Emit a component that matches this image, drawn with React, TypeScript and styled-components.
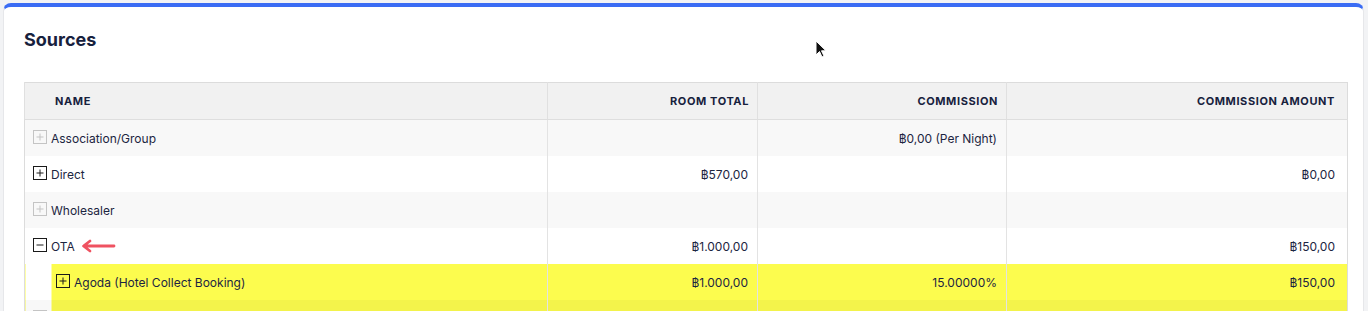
import React from "react";
import styled, { createGlobalStyle, css } from "styled-components";

const GlobalStyle = createGlobalStyle`
  html, body {
    margin: 0;
    padding: 0;
    background: #f2f3f5;
    font-family: Inter, "Noto Sans", "DejaVu Sans", sans-serif;
    color: #1c2541;
  }
`;

const Page = styled.div`
  position: relative;
  height: 311px;
  overflow: hidden;
  padding: 3px 4px 0 3px;
`;

const Card = styled.div`
  background: #ffffff;
  border-top: 4px solid #3a6cf4;
  border-left: 1px solid #e6e7ea;
  border-right: 1px solid #e6e7ea;
  border-radius: 8px 8px 0 0;
  padding: 21px 15px 0 20px;
  height: 320px;
`;

const Title = styled.h2`
  margin: 0 0 30px 0;
  font-size: 18px;
  line-height: 24px;
  font-weight: 700;
  color: #17213d;
`;

const Table = styled.table`
  width: 1323px;
  border-collapse: collapse;
  table-layout: fixed;
  border: 1px solid #dcdcdc;
  font-size: 12px;
`;

const HeadCell = styled.th<{ $align?: "left" | "right"; $last?: boolean }>`
  height: 36px;
  padding: 0 ${(p) => (p.$last ? "12px" : "8px")} 0 ${(p) => (p.$align === "left" ? "30px" : "8px")};
  text-align: ${(p) => p.$align ?? "right"};
  background: #f1f1f1;
  border-bottom: 1px solid #dedede;
  border-left: 1px solid #e0e0e0;
  font-size: 11px;
  font-weight: 700;
  letter-spacing: 0.6px;
  color: #17213d;
  text-transform: uppercase;
`;

const Row = styled.tr<{ $striped?: boolean }>`
  height: 36px;
  background: ${(p) => (p.$striped ? "#f8f8f8" : "#ffffff")};
`;

const yellow = (striped?: boolean) => (striped ? "#f3f34b" : "#fcfc4e");

const Cell = styled.td<{ $highlight?: boolean; $striped?: boolean; $last?: boolean }>`
  padding: 0 ${(p) => (p.$last ? "12px" : "9px")} 0 8px;
  text-align: right;
  border-left: 1px solid #e3e3e3;
  color: #1c2541;
  white-space: nowrap;
  ${(p) =>
    p.$highlight &&
    css`
      background: ${yellow(p.$striped)};
    `}
`;

/* the marker highlight starts 26px into the name column */
const NameCell = styled.td<{ $highlight?: boolean; $striped?: boolean }>`
  padding: 0;
  height: 36px;
  ${(p) =>
    p.$highlight &&
    css`
      background: linear-gradient(to right, transparent 26px, ${yellow(p.$striped)} 26px);
    `}
`;

const NameInner = styled.div<{ $level: number }>`
  display: flex;
  align-items: center;
  gap: 4px;
  height: 36px;
  padding-left: ${(p) => (p.$level > 0 ? 31 : 8)}px;
`;

const Toggle = styled.span<{ $disabled?: boolean }>`
  display: inline-flex;
  width: 14px;
  height: 14px;
  flex: none;
  box-sizing: border-box;
  margin-top: -2px;
  border: 1px solid ${(p) => (p.$disabled ? "#c4c4c4" : "#1a1a1a")};
  color: ${(p) => (p.$disabled ? "#c4c4c4" : "#1a1a1a")};
`;

const Arrow = styled.svg`
  margin-left: 2px;
`;

const Cursor = styled.svg`
  position: absolute;
  left: 815px;
  top: 40px;
`;

function ToggleIcon({ open, disabled }: { open?: boolean; disabled?: boolean }) {
  return (
    <Toggle $disabled={disabled}>
      <svg width="12" height="12" viewBox="0 0 12 12">
        <path d="M2.5 6h7" stroke="currentColor" strokeWidth="1" />
        {!open && <path d="M6 2.5v7" stroke="currentColor" strokeWidth="1" />}
      </svg>
    </Toggle>
  );
}

interface SourceRow {
  name: string;
  level: number;
  roomTotal: string;
  commission: string;
  amount: string;
  striped?: boolean;
  open?: boolean;
  disabled?: boolean;
  highlight?: boolean;
  marker?: boolean;
}

const rows: SourceRow[] = [
  { name: "Association/Group", level: 0, roomTotal: "", commission: "฿0,00 (Per Night)", amount: "", disabled: true, striped: true },
  { name: "Direct", level: 0, roomTotal: "฿570,00", commission: "", amount: "฿0,00" },
  { name: "Wholesaler", level: 0, roomTotal: "", commission: "", amount: "", disabled: true, striped: true },
  { name: "OTA", level: 0, roomTotal: "฿1.000,00", commission: "", amount: "฿150,00", open: true, marker: true },
  { name: "Agoda (Hotel Collect Booking)", level: 1, roomTotal: "฿1.000,00", commission: "15.00000%", amount: "฿150,00", highlight: true },
  { name: "", level: 0, roomTotal: "", commission: "", amount: "", highlight: true, disabled: true, striped: true },
];

export default function App() {
  return (
    <Page>
      <GlobalStyle />
      <Card>
        <Title>Sources</Title>
        <Table>
          <colgroup>
            <col style={{ width: 523 }} />
            <col style={{ width: 210 }} />
            <col style={{ width: 249 }} />
            <col style={{ width: 341 }} />
          </colgroup>
          <thead>
            <tr>
              <HeadCell $align="left">Name</HeadCell>
              <HeadCell>Room Total</HeadCell>
              <HeadCell>Commission</HeadCell>
              <HeadCell $last>Commission Amount</HeadCell>
            </tr>
          </thead>
          <tbody>
            {rows.map((r, i) => (
              <Row key={i} $striped={r.striped}>
                <NameCell $highlight={r.highlight} $striped={r.striped}>
                  <NameInner $level={r.level}>
                    <ToggleIcon open={r.open} disabled={r.disabled} />
                    {r.name}
                    {r.marker && (
                      <Arrow width="35" height="14" viewBox="0 0 35 14">
                        <path
                          d="M33 7H3M9 2L2.5 7 9 12"
                          fill="none"
                          stroke="#ef5261"
                          strokeWidth="2.8"
                          strokeLinecap="round"
                          strokeLinejoin="round"
                        />
                      </Arrow>
                    )}
                  </NameInner>
                </NameCell>
                <Cell $highlight={r.highlight} $striped={r.striped}>{r.roomTotal}</Cell>
                <Cell $highlight={r.highlight} $striped={r.striped}>{r.commission}</Cell>
                <Cell $highlight={r.highlight} $striped={r.striped} $last>{r.amount}</Cell>
              </Row>
            ))}
          </tbody>
        </Table>
      </Card>
      <Cursor width="12" height="18" viewBox="0 0 12 18">
        <path d="M1 1v14l3.5-3.5 2.5 5.5 2-1-2.5-5.2H11z" fill="#111" stroke="#fff" strokeWidth="1" />
      </Cursor>
    </Page>
  );
}
